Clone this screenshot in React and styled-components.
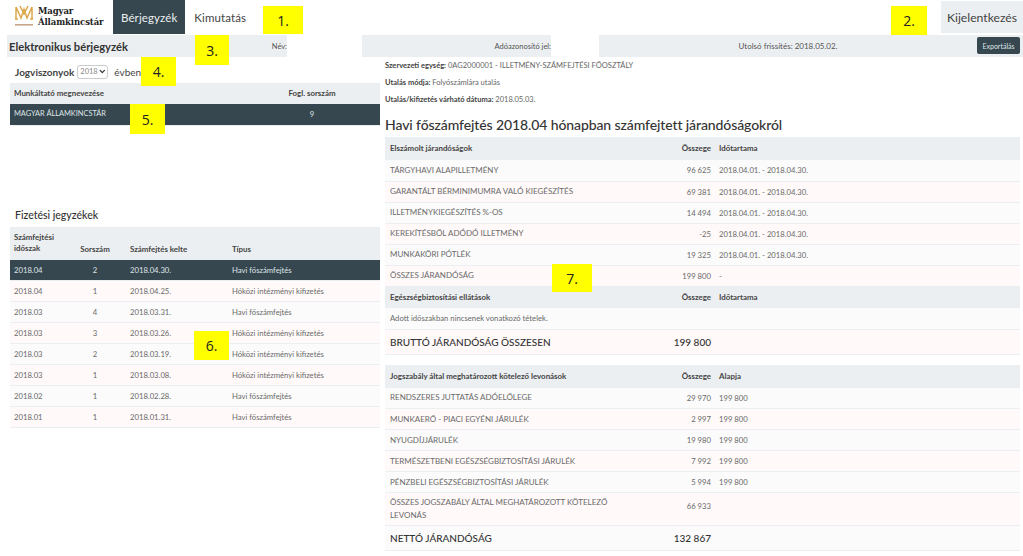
import styled, { createGlobalStyle } from "styled-components";
import { ChevronDown } from "lucide-react";

const GlobalStyle = createGlobalStyle`
    html, body {
        margin: 0;
        background: #fff;
        font-family: "Lato", "Liberation Sans", sans-serif;
        color: #555;
    }
`;

const earnings = [
    ["TÁRGYHAVI ALAPILLETMÉNY", "96 625", "2018.04.01. - 2018.04.30."],
    ["GARANTÁLT BÉRMINIMUMRA VALÓ KIEGÉSZÍTÉS", "69 381", "2018.04.01. - 2018.04.30."],
    ["ILLETMÉNYKIEGÉSZÍTÉS %-OS", "14 494", "2018.04.01. - 2018.04.30."],
    ["KEREKÍTÉSBŐL ADÓDÓ ILLETMÉNY", "-25", "2018.04.01. - 2018.04.30."],
    ["MUNKAKÖRI PÓTLÉK", "19 325", "2018.04.01. - 2018.04.30."],
    ["ÖSSZES JÁRANDÓSÁG", "199 800", "-"],
];

const deductions = [
    ["RENDSZERES JUTTATÁS ADÓELŐLEGE", "29 970", "199 800"],
    ["MUNKAERŐ - PIACI EGYÉNI JÁRULÉK", "2 997", "199 800"],
    ["NYUGDÍJJÁRULÉK", "19 980", "199 800"],
    ["TERMÉSZETBENI EGÉSZSÉGBIZTOSÍTÁSI JÁRULÉK", "7 992", "199 800"],
    ["PÉNZBELI EGÉSZSÉGBIZTOSÍTÁSI JÁRULÉK", "5 994", "199 800"],
];

const payslips = [
    ["2018.04", "2", "2018.04.30.", "Havi főszámfejtés"],
    ["2018.04", "1", "2018.04.25.", "Hóközi intézményi kifizetés"],
    ["2018.03", "4", "2018.03.31.", "Havi főszámfejtés"],
    ["2018.03", "3", "2018.03.26.", "Hóközi intézményi kifizetés"],
    ["2018.03", "2", "2018.03.19.", "Hóközi intézményi kifizetés"],
    ["2018.03", "1", "2018.03.08.", "Hóközi intézményi kifizetés"],
    ["2018.02", "1", "2018.02.28.", "Havi főszámfejtés"],
    ["2018.01", "1", "2018.01.31.", "Havi főszámfejtés"],
];

const badges = [
    ["1.", 263, 6, 40, 28],
    ["2.", 891, 6, 36, 29],
    ["3.", 195, 35, 34, 30],
    ["4.", 141, 57, 35, 29],
    ["5.", 130, 104, 35, 30],
    ["6.", 194, 331, 35, 29],
    ["7.", 552, 264, 40, 28],
];

const Logo = () => (
    <LogoWrap>
        <LogoMark width="20" height="22" viewBox="0 0 20 22" fill="none">
            <path d="M2 3 L2 15 M18 3 L18 15 M2 3 L7 14 L10 5 L13 14 L18 3 M1 15 L4 15 M16 15 L19 15 M6 2 L10 10 L14 2" stroke="#dba94a" strokeWidth="1.5" />
            <rect x="1" y="20" width="18" height="1.6" fill="#c9a68a" />
        </LogoMark>
        <LogoText>Magyar<br />Államkincstár</LogoText>
    </LogoWrap>
);

const App = () => {
    return (
        <Page>
            <GlobalStyle />
            <Nav>
                <Logo />
                <Tab $active>Bérjegyzék</Tab>
                <Tab>Kimutatás</Tab>
                <Logout>Kijelentkezés</Logout>
            </Nav>
            <Bar>
                <BarTitle>Elektronikus bérjegyzék</BarTitle>
                <BarLabel>Név:</BarLabel>
                <BarInput />
                <BarLabel>Adóazonosító jel:</BarLabel>
                <BarInput />
                <BarCenter>Utolsó frissítés: 2018.05.02.</BarCenter>
                <ExportButton>Exportálás</ExportButton>
            </Bar>
            <Main>
                <Left>
                    <YearRow>
                        Jogviszonyok
                        <YearSelect>
                            2018
                            <ChevronDown size={9} strokeWidth={3.5} color="#333" />
                        </YearSelect>
                        <YearWord>évben</YearWord>
                    </YearRow>
                    <Table>
                        <thead>
                            <tr>
                                <Th>Munkáltató megnevezése</Th>
                                <Th $w={136} $center>Fogl. sorszám</Th>
                            </tr>
                        </thead>
                        <tbody>
                            <Row $active>
                                <Td $small>MAGYAR ÁLLAMKINCSTÁR</Td>
                                <Td $center>9</Td>
                            </Row>
                        </tbody>
                    </Table>
                    <SubTitle>Fizetési jegyzékek</SubTitle>
                    <Table>
                        <thead>
                            <tr>
                                <Th $w={54} $h={33}>Számfejtési<br />időszak</Th>
                                <Th $w={62} $h={33} $center $low>Sorszám</Th>
                                <Th $w={102} $h={33} $low>Számfejtés kelte</Th>
                                <Th $h={33} $low>Típus</Th>
                            </tr>
                        </thead>
                        <tbody>
                            {payslips.map((p, i) => (
                                <Row key={i} $active={i === 0} $pink={i % 2 === 1}>
                                    <Td>{p[0]}</Td>
                                    <Td $center>{p[1]}</Td>
                                    <Td>{p[2]}</Td>
                                    <Td>{p[3]}</Td>
                                </Row>
                            ))}
                        </tbody>
                    </Table>
                </Left>
                <Right>
                    <Info><b>Szervezeti egység:</b> 0AG2000001 - ILLETMÉNY-SZÁMFEJTÉSI FŐOSZTÁLY</Info>
                    <Info><b>Utalás módja:</b> Folyószámlára utalás</Info>
                    <Info><b>Utalás/kifizetés várható dátuma:</b> 2018.05.03.</Info>
                    <Title>Havi főszámfejtés 2018.04 hónapban számfejtett járandóságokról</Title>
                    <Table>
                        <thead>
                            <tr>
                                <Th $w={272} $h={23}>Elszámolt járandóságok</Th>
                                <Th $w={58} $h={23} $right>Összege</Th>
                                <Th $h={23}>Időtartama</Th>
                            </tr>
                        </thead>
                        <tbody>
                            {earnings.map((r, i) => (
                                <Row key={i} $pink={i % 2 === 1}>
                                    <CapsTd>{r[0]}</CapsTd>
                                    <Td $right>{r[1]}</Td>
                                    <Td>{r[2]}</Td>
                                </Row>
                            ))}
                            <tr>
                                <Th $h={22}>Egészségbiztosítási ellátások</Th>
                                <Th $h={22} $right>Összege</Th>
                                <Th $h={22}>Időtartama</Th>
                            </tr>
                            <Row>
                                <Td colSpan={3}>Adott időszakban nincsenek vonatkozó tételek.</Td>
                            </Row>
                            <Row $pink>
                                <TotalCell>BRUTTÓ JÁRANDÓSÁG ÖSSZESEN</TotalCell>
                                <TotalCell $right>199 800</TotalCell>
                                <TotalCell />
                            </Row>
                        </tbody>
                    </Table>
                    <Gap />
                    <Table>
                        <thead>
                            <tr>
                                <Th $w={272} $h={23}>Jogszabály által meghatározott kötelező levonások</Th>
                                <Th $w={58} $h={23} $right>Összege</Th>
                                <Th $h={23}>Alapja</Th>
                            </tr>
                        </thead>
                        <tbody>
                            {deductions.map((r, i) => (
                                <Row key={i} $pink={i % 2 === 1}>
                                    <CapsTd>{r[0]}</CapsTd>
                                    <Td $right>{r[1]}</Td>
                                    <Td>{r[2]}</Td>
                                </Row>
                            ))}
                            <Row $pink>
                                <CapsTd $wrap>ÖSSZES JOGSZABÁLY ÁLTAL MEGHATÁROZOTT KÖTELEZŐ LEVONÁS</CapsTd>
                                <Td $right $top>66 933</Td>
                                <Td />
                            </Row>
                            <Row>
                                <TotalCell>NETTÓ JÁRANDÓSÁG</TotalCell>
                                <TotalCell $right>132 867</TotalCell>
                                <TotalCell />
                            </Row>
                        </tbody>
                    </Table>
                </Right>
            </Main>
            {badges.map(([label, x, y, w, h]) => (
                <Badge key={label} $x={x} $y={y} $w={w} $h={h}>{label}</Badge>
            ))}
        </Page>
    );
};

const Page = styled.div`
    position: relative;
    width: 1023px;
    height: 556px;
    overflow: hidden;
`;

const Nav = styled.nav`
    display: flex;
    height: 35px;
`;

const LogoWrap = styled.div`
    display: flex;
    align-items: center;
    gap: 4px;
    width: 113px;
    padding: 0 0 2px 14px;
    box-sizing: border-box;
`;

const LogoMark = styled.svg`
    margin-bottom: 3px;
`;

const LogoText = styled.div`
    font-family: "DejaVu Serif", serif;
    font-size: 8.5px;
    font-weight: 700;
    line-height: 11px;
    color: #222;
    letter-spacing: -0.1px;
    white-space: nowrap;
`;

const Tab = styled.div`
    display: flex;
    align-items: center;
    padding: 0 ${(p) => (p.$active ? 8 : 9)}px;
    height: 34px;
    font-size: 11.5px;
    letter-spacing: 0.1px;
    color: ${(p) => (p.$active ? "#eceff1" : "#444")};
    background: ${(p) => (p.$active ? "#37474f" : "transparent")};
`;

const Logout = styled.div`
    display: flex;
    align-items: center;
    justify-content: center;
    margin: 1px 0 0 auto;
    width: 82px;
    height: 32px;
    font-size: 12.2px;
    color: #444;
    background: #eceff1;
`;

const Bar = styled.div`
    display: grid;
    grid-template-columns: 230px 50px 75px 189px 48px 378px 43px;
    align-items: center;
    height: 22px;
    margin-left: 7px;
    background: #eceff1;
`;

const BarTitle = styled.div`
    padding-left: 2px;
    font-size: 11.2px;
    font-weight: 700;
    color: #333;
`;

const BarLabel = styled.div`
    text-align: right;
    font-size: 7.5px;
    color: #555;
`;

const BarInput = styled.div`
    height: 22px;
    background: #fff;
`;

const BarCenter = styled.div`
    text-align: center;
    font-size: 8px;
    color: #555;
`;

const ExportButton = styled.button`
    height: 17px;
    margin-top: -1px;
    padding: 0;
    border: 0;
    border-radius: 2px;
    font-family: inherit;
    font-size: 7px;
    color: #dfe5e8;
    background: #37474f;
`;

const Main = styled.div`
    display: grid;
    grid-template-columns: 370px 635px;
    gap: 5px;
    padding-left: 10px;
`;

const Left = styled.section``;

const Right = styled.section`
    td:first-child,
    th:first-child {
        padding-left: 5px;
    }
`;

const YearRow = styled.div`
    display: flex;
    align-items: center;
    box-sizing: border-box;
    height: 26px;
    padding: 3px 0 0 5px;
    font-size: 10px;
    font-weight: 700;
    color: #444;
`;

const YearSelect = styled.div`
    display: flex;
    align-items: center;
    justify-content: space-between;
    box-sizing: border-box;
    width: 31px;
    height: 14px;
    margin-left: 3px;
    padding: 0 1px 0 2px;
    border: 1px solid #ccc;
    border-radius: 3px;
    font-size: 7.5px;
    font-weight: 400;
    color: #888;
    background: #fff;
`;

const YearWord = styled.span`
    margin-left: 6px;
    font-weight: 400;
`;

const Table = styled.table`
    width: 100%;
    table-layout: fixed;
    border-collapse: collapse;
`;

const Th = styled.th`
    box-sizing: border-box;
    width: ${(p) => (p.$w ? `${p.$w}px` : "auto")};
    height: ${(p) => p.$h || 21}px;
    padding: ${(p) => (p.$low ? "12px 4px 0" : "1px 4px")};
    font-size: 7.9px;
    line-height: 11px;
    font-weight: 700;
    color: #444;
    vertical-align: middle;
    text-align: ${(p) => (p.$center ? "center" : p.$right ? "right" : "left")};
    background: #eceff1;
`;

const Row = styled.tr`
    height: 21px;
    color: ${(p) => (p.$active ? "#dfe5e8" : "#6a6a6a")};
    background: ${(p) => (p.$active ? "#37474f" : p.$pink ? "#fff9f9" : "#fbfbfb")};
    border-bottom: 1px solid #eceff1;
`;

const Td = styled.td`
    padding: ${(p) => (p.$top ? "7px 4px 0" : "0 4px")};
    font-size: ${(p) => (p.$small ? 7.4 : 7.7)}px;
    line-height: 12px;
    vertical-align: ${(p) => (p.$top ? "top" : "middle")};
    text-align: ${(p) => (p.$center ? "center" : p.$right ? "right" : "left")};
`;

const CapsTd = styled.td`
    padding: ${(p) => (p.$wrap ? "3px 45px 3px 4px" : "0 4px")};
    font-size: 8px;
    line-height: 13px;
`;

const TotalCell = styled.td`
    height: 24px;
    padding: 0 4px;
    font-size: 10px;
    font-weight: 500;
    color: #333;
    text-align: ${(p) => (p.$right ? "right" : "left")};
`;

const SubTitle = styled.h3`
    margin: 83px 0 5px;
    padding-left: 5px;
    font-size: 10.5px;
    line-height: 13px;
    font-weight: 500;
    color: #333;
`;

const Info = styled.p`
    margin: 0;
    height: 17px;
    font-size: 7.5px;
    line-height: 17px;
    color: #666;

    b {
        color: #444;
    }
`;

const Title = styled.h2`
    margin: 7px 0 3px;
    font-size: 14px;
    line-height: 19px;
    letter-spacing: -0.1px;
    font-weight: 500;
    color: #333;
`;

const Gap = styled.div`
    height: 10px;
`;

const Badge = styled.div`
    position: absolute;
    left: ${(p) => p.$x}px;
    top: ${(p) => p.$y}px;
    width: ${(p) => p.$w}px;
    height: ${(p) => p.$h}px;
    display: flex;
    align-items: center;
    justify-content: center;
    font-family: "Open Sans", sans-serif;
    font-size: 14px;
    color: #222;
    background: #ffff00;
`;

export default App;
